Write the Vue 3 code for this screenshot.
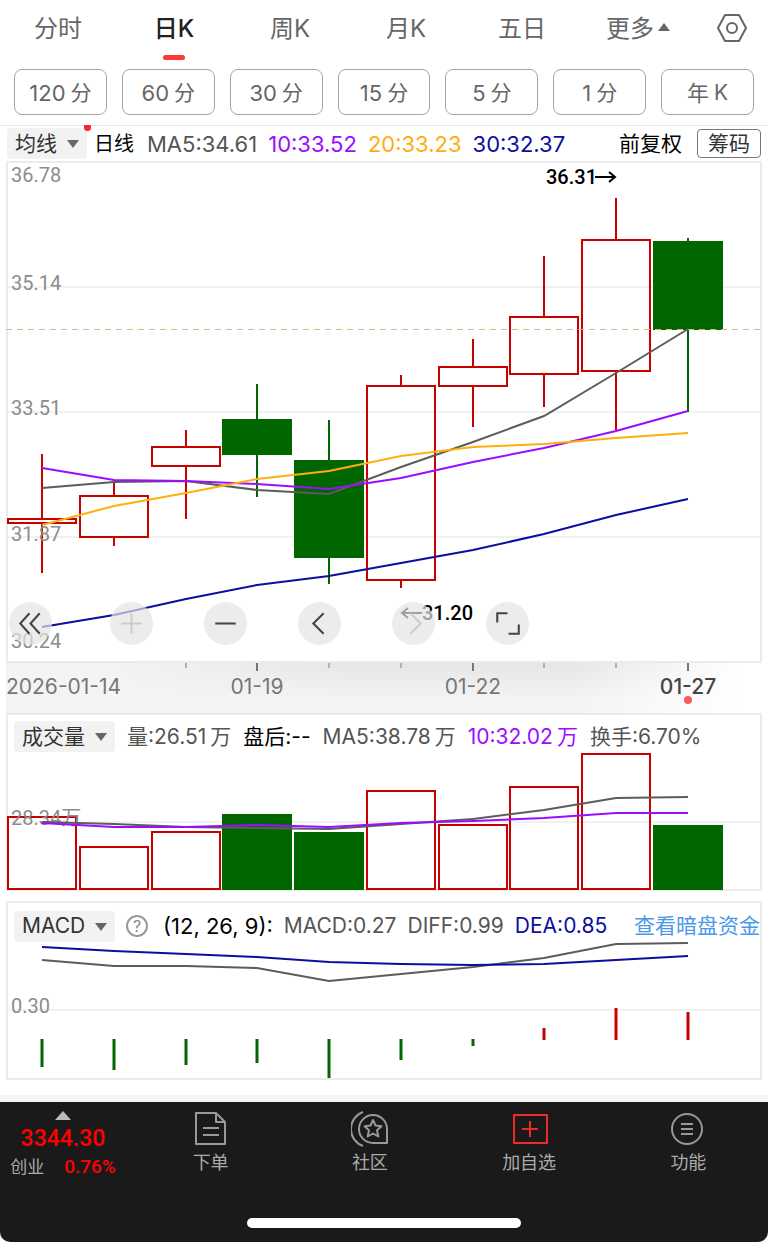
<script setup>
import { ref } from 'vue'

const tabs = ['分时', '日K', '周K', '月K', '五日', '更多']
const activeTab = ref('日K')

const periods = [
  ['120', '分'], ['60', '分'], ['30', '分'], ['15', '分'],
  ['5', '分'], ['1', '分'], ['年', 'K'],
]

const xs = [42, 114, 186, 257, 329, 401, 473, 544, 616, 688]
const line = (ys) => ys.map((y, i) => `${xs[i]},${y}`).join(' ')

// Each candle: high, body top, body bottom, low
const candles = [
  [454, 519, 523, 573, 'up'],
  [482, 496, 537, 546, 'up'],
  [430, 447, 466, 519, 'up'],
  [384, 420, 454, 497, 'down'],
  [420, 461, 557, 584, 'down'],
  [375, 386, 580, 588, 'up'],
  [339, 367, 386, 427, 'up'],
  [256, 317, 374, 407, 'up'],
  [198, 240, 371, 430, 'up'],
  [238, 242, 329, 412, 'down'],
].map(([high, top, bottom, low, dir], i) => ({ high, top, bottom, low, dir, x: xs[i] }))

const priceLines = [
  ['ma5', line([488, 482, 481, 490, 494, 467, 442, 416, 373, 329])],
  ['ma10', line([468, 480, 481, 484, 489, 478, 462, 448, 431, 411])],
  ['ma20', line([525, 506, 493, 479, 471, 456, 447, 444, 438, 433])],
  ['ma30', line([627, 615, 599, 585, 576, 563, 550, 534, 515, 499])],
]
const priceLabels = [['36.78', 182], ['35.14', 290], ['33.51', 415], ['31.87', 541], ['30.24', 648]]

const volumes = [817, 847, 832, 815, 833, 791, 825, 787, 754, 826]
  .map((top, i) => ({ top, x: xs[i], dir: candles[i].dir }))
const volumeLines = [
  ['ma5', line([822, 824, 827, 828, 829, 824, 819, 810, 798, 797])],
  ['ma10', line([823, 827, 827, 825, 827, 823, 821, 818, 813, 813])],
]

const macdBars = [
  [1039, 1067], [1039, 1070], [1039, 1065], [1039, 1063], [1039, 1078],
  [1039, 1060], [1039, 1046], [1028, 1040], [1008, 1040], [1012, 1040],
].map(([y1, y2], i) => ({ y1, y2, x: xs[i], dir: i > 6 ? 'up' : 'down' }))
const macdLines = [
  ['ma5', line([960, 966, 966, 968, 981, 974, 967, 958, 944, 943])],
  ['ma30', line([947, 951, 954, 957, 962, 964, 965, 964, 960, 956])],
]

const minorTicks = [186, 329, 401, 544, 616]
const majorTicks = [257, 473, 688]

const tools = [
  { name: '最早', d: 'M20 11 11 21 20 31M30 11 21 21 30 31', off: false },
  { name: '放大', d: 'M11 21H31M21 11V31', off: true },
  { name: '缩小', d: 'M11 21H31', off: false },
  { name: '向左', d: 'M25 11 15 21 25 31', off: false },
  { name: '向右', d: 'M18 11 28 21 18 31', off: true },
  { name: '全屏', d: 'M11 20V11H21M32 22V31H22', off: false },
]
</script>

<template>
  <div class="page">
    <nav class="tabs">
      <button
        v-for="t in tabs" :key="t" class="tab" :class="{ active: t === activeTab }"
        @click="activeTab = t"
      >{{ t }}<svg v-if="t === '更多'" class="more" viewBox="0 0 12 9"><path d="M6 0 12 8H0Z" /></svg></button>
      <button class="gear" aria-label="设置">
        <svg width="32" height="30" viewBox="0 0 32 30">
          <path d="M9 2H23L30 15 23 28H9L2 15Z" /><circle cx="16" cy="15" r="5" />
        </svg>
      </button>
    </nav>

    <div class="periods">
      <button v-for="p in periods" :key="p[0]" class="period">
        <span>{{ p[0] }}</span><span>{{ p[1] }}</span>
      </button>
    </div>

    <div class="ma-row">
      <label class="picker dotted">
        <select aria-label="主图指标"><option>均线</option></select>
        <svg class="caret" viewBox="0 0 12 9"><path d="M0 0H12L6 8Z" /></svg>
      </label>
      <span class="black kind">日线</span>
      <div class="ma-values">
        <span>MA5:34.61</span>
        <span class="purple">10:33.52</span>
        <span class="orange">20:33.23</span>
        <span class="blue">30:32.37</span>
      </div>
      <span class="black adjust">前复权</span>
      <button class="chips">筹码</button>
    </div>

    <section class="price">
      <div class="panel">
        <svg class="plot" viewBox="8 163 752 498">
          <path class="grid" d="M8 287H760M8 412H760M8 537H760" />
          <g v-for="c in candles" :key="c.x" :class="c.dir">
            <path class="wick" :d="`M${c.x} ${c.high}V${c.top}M${c.x} ${c.bottom}V${c.low}`" />
            <rect :x="c.x - 34" :y="c.top" width="68" :height="c.bottom - c.top" />
          </g>
          <path class="last" d="M6 329H762" />
          <polyline v-for="l in priceLines" :key="l[0]" :class="l[0]" :points="l[1]" />
          <text v-for="p in priceLabels" :key="p[0]" class="scale" x="11" :y="p[1]">{{ p[0] }}</text>
          <text class="mark" x="546" y="184">36.31</text>
          <path class="arrow" d="M595 177H615M609 172 615 177 609 182" />
          <text class="mark" x="422" y="620">31.20</text>
          <path class="arrow" d="M422 613H402M408 608 402 613 408 618" />
        </svg>
        <div class="tools">
          <button v-for="t in tools" :key="t.name" class="tool" :class="{ off: t.off }" :aria-label="t.name">
            <svg viewBox="0 0 42 42"><path :d="t.d" /></svg>
          </button>
        </div>
      </div>
      <div class="dates">
        <svg class="plot" viewBox="6 663 756 50">
          <path v-for="x in minorTicks" :key="x" class="minor" :d="`M${x} 663V668`" />
          <path v-for="x in majorTicks" :key="x" class="major" :d="`M${x} 663V671`" />
          <text class="date" x="6" y="694">2026-01-14</text>
          <text class="date mid" x="257" y="694">01-19</text>
          <text class="date mid" x="473" y="694">01-22</text>
          <text class="date mid now" x="688" y="694">01-27</text>
          <circle class="today" cx="688" cy="700" r="4" />
        </svg>
      </div>
    </section>

    <section class="panel">
      <header class="head">
        <label class="picker">
          <select aria-label="副图指标一"><option>成交量</option></select>
          <svg class="caret" viewBox="0 0 12 9"><path d="M0 0H12L6 8Z" /></svg>
        </label>
        <span>量:26.51<i>万</i></span>
        <span class="black">盘后:--</span>
        <span>MA5:38.78<i>万</i></span>
        <span class="purple">10:32.02<i>万</i></span>
        <span>换手:6.70%</span>
      </header>
      <svg class="plot" viewBox="8 752 752 137">
        <path class="grid" d="M8 822H760" />
        <g v-for="v in volumes" :key="v.x" :class="v.dir">
          <rect :x="v.x - 34" :y="v.top" width="68" :height="889 - v.top" />
        </g>
        <text class="scale" x="11" y="825">28.34万</text>
        <polyline v-for="l in volumeLines" :key="l[0]" :class="l[0]" :points="l[1]" />
      </svg>
    </section>

    <section class="panel macd">
      <header class="head">
        <label class="picker">
          <select aria-label="副图指标二"><option>MACD</option></select>
          <svg class="caret" viewBox="0 0 12 9"><path d="M0 0H12L6 8Z" /></svg>
        </label>
        <button class="help" aria-label="指标说明">?</button>
        <span class="black params">(12, 26, 9):</span>
        <span>MACD:0.27</span>
        <span>DIFF:0.99</span>
        <span class="blue">DEA:0.85</span>
        <a class="link" href="#">查看暗盘资金</a>
      </header>
      <svg class="plot" viewBox="8 941 752 137">
        <path class="grid" d="M8 1010H760" />
        <polyline v-for="l in macdLines" :key="l[0]" :class="l[0]" :points="l[1]" />
        <g v-for="b in macdBars" :key="b.x" :class="b.dir">
          <path class="bar" :d="`M${b.x} ${b.y1}V${b.y2}`" />
        </g>
        <text class="scale" x="11" y="1013">0.30</text>
      </svg>
    </section>

    <footer class="dock">
      <div class="dock-row">
        <button class="index">
          <svg class="up-mark" viewBox="0 0 16 9"><path d="M8 0 16 9H0Z" /></svg>
          <strong>3344.30</strong>
          <span class="index-line"><span>创业</span><b>0.76%</b></span>
        </button>
        <button class="dock-item">
          <svg viewBox="0 0 38 38">
            <path d="M4 3H24L33 12V34H4ZM24 3V12H33M11 18H27M11 25H27" />
          </svg>
          <span>下单</span>
        </button>
        <button class="dock-item">
          <svg viewBox="0 0 38 38">
            <path d="M22 33A14 14 0 1 1 36 19V33Z" />
            <path d="M12 2A18 18 0 0 0 12 36" />
            <path d="M22 10 24.5 15.5 30.5 16.3 26 20.3 27.3 26.5 22 23.5 16.7 26.5 18 20.3 13.5 16.3 19.5 15.5Z" />
          </svg>
          <span>社区</span>
        </button>
        <button class="dock-item add">
          <svg viewBox="0 0 38 38">
            <path d="M4 5H37V33H4ZM12 19H28M20 11V27" />
          </svg>
          <span>加自选</span>
        </button>
        <button class="dock-item">
          <svg viewBox="0 0 38 38">
            <circle cx="18" cy="19" r="15" /><path d="M12 14H24M12 19H24M12 24H24" />
          </svg>
          <span>功能</span>
        </button>
      </div>
      <div class="home"></div>
    </footer>
  </div>
</template>

<style>
body { margin: 0; background: #fff; }
</style>

<style scoped>
.page {
  font-family: Inter, "Noto Sans CJK SC", sans-serif;
  font-size: 21px;
  line-height: 30px;
  color: #555;
  background: #fff;
}
.page * { box-sizing: border-box; }
button, select {
  font: inherit;
  color: inherit;
  border: 0;
  padding: 0;
  margin: 0;
  background: none;
}
.tabs { display: flex; height: 64px; }
.tab {
  position: relative;
  flex: 1;
  height: 58px;
  font-size: 24px;
  color: #666;
}
.tab.active { font-weight: 500; color: #222; }
.tab.active::after {
  content: "";
  position: absolute;
  left: 50%;
  bottom: -2px;
  width: 22px;
  height: 5px;
  margin-left: -11px;
  border-radius: 3px;
  background: #fb3b33;
}
.more { width: 12px; height: 9px; margin: 0 0 5px 4px; fill: #666; }
.gear { flex: 0 0 72px; height: 56px; }
.gear svg { display: block; margin: 0 auto; fill: none; stroke: #666; stroke-width: 2; stroke-linejoin: round; }

.periods {
  display: grid;
  grid-template-columns: repeat(7, 1fr);
  gap: 15px;
  padding: 5px 14px 10px;
  border-bottom: 1px solid #e6e6e6;
}
.period {
  display: flex;
  justify-content: center;
  align-items: center;
  gap: 5px;
  height: 46px;
  padding-top: 2px;
  border: 1px solid #a6a6a6;
  border-radius: 8px;
  color: #666;
}
.period span:first-child { font-size: 22px; }

.ma-row {
  display: flex;
  align-items: center;
  height: 35px;
  padding: 0 7px;
  white-space: nowrap;
}
.ma-values { display: flex; gap: 11px; margin-left: 13px; font-size: 22px; }
.kind { margin-left: 7px; font-size: 20px; }
.adjust { margin-left: auto; }
.chips {
  width: 64px;
  height: 29px;
  margin-left: 15px;
  line-height: 26px;
  border: 1px solid #777;
  border-radius: 4px;
  color: #333;
}
.black { color: #000; }
.purple { color: #9b0dff; }
.orange { color: #ffae0d; }
.blue { color: #0d0da0; }

.picker {
  position: relative;
  display: flex;
  align-items: center;
  height: 31px;
  padding: 0 8px;
  border-radius: 4px;
  background: #f2f2f2;
  color: #333;
}
.picker select { appearance: none; height: 31px; padding-right: 22px; outline: 0; }
.caret {
  position: absolute;
  right: 8px;
  top: 12px;
  width: 12px;
  height: 9px;
  fill: #666;
  pointer-events: none;
}
.dotted::after {
  content: "";
  position: absolute;
  right: -4px;
  top: -3px;
  width: 7px;
  height: 6px;
  border-radius: 1px 1px 4px 4px;
  background: #ff1f35;
}

.panel { position: relative; margin: 0 6px; border: 2px solid #ebebeb; }
.macd { margin-top: 10px; }
.plot { display: block; width: 100%; overflow: visible; fill: none; stroke-width: 2; }
.grid { stroke: #f1f1f1; }
.up { stroke: #c80000; fill: none; }
.down { stroke: #006600; fill: #006600; }
.bar { stroke-width: 3; }
.last { stroke: #d8b88c; stroke-width: 1; stroke-dasharray: 6 5; shape-rendering: crispEdges; }
.ma5 { stroke: #5c5c5c; }
.ma10 { stroke: #9b0dff; }
.ma20 { stroke: #ffae0d; }
.ma30 { stroke: #0d0da0; }
.scale, .mark { font-family: Roboto, "Noto Sans CJK SC", sans-serif; font-size: 20px; }
.scale { fill: #8c8c8c; }
.mark { font-weight: 500; fill: #000; }
.arrow { stroke: #000; }
.tools {
  position: absolute;
  left: 1px;
  bottom: 16px;
  display: flex;
  gap: 51px;
}
.tool {
  width: 43px;
  height: 43px;
  border-radius: 50%;
  background: rgba(228, 228, 228, 0.7);
}
.tool:first-child { margin-right: 7px; }
.tool svg { display: block; width: 43px; height: 43px; fill: none; stroke: #444; stroke-width: 2; }
.tool.off svg { stroke: #ccc; }

.dates {
  margin: 0 6px;
  background:
    linear-gradient(90deg, #f4f4f4 12%, rgba(244, 244, 244, 0) 45%, rgba(255, 255, 255, 0) 75%, #fff 97%),
    linear-gradient(#e6e6e6, #f4f4f4 75%);
}
.minor { stroke: #b0b0b0; }
.major { stroke: #777; }
.date { font-size: 21px; fill: #777; }
.mid { text-anchor: middle; }
.now { font-weight: 500; fill: #444; }
.today { fill: #f75b5f; }

.head {
  display: flex;
  align-items: center;
  gap: 12px;
  height: 37px;
  padding: 6px 0 0 6px;
  white-space: nowrap;
}
.head .picker { width: 101px; }
.head i { font-style: normal; margin-left: 4px; }
.macd .head { height: 38px; gap: 11px; padding-top: 8px; }
.help {
  width: 22px;
  height: 22px;
  border: 2px solid #999;
  border-radius: 50%;
  font-size: 16px;
  line-height: 18px;
  color: #888;
}
.params { margin-left: 4px; font-size: 22px; }
.link { margin-left: auto; color: #4a98ea; text-decoration: none; }

.dock {
  margin-top: 15px;
  padding-bottom: 14px;
  border-top: 7px solid #f4f4f4;
  border-radius: 0 0 10px 10px;
  background: #1a1a1a;
  color: #aaa;
}
.dock-row { display: flex; height: 116px; }
.index {
  flex: 0 0 131px;
  display: flex;
  flex-direction: column;
  align-items: center;
  padding: 9px 5px 0 0;
  font-size: 17px;
}
.up-mark { width: 16px; height: 9px; fill: #bbb; }
.index strong, .index b { font-family: Roboto, sans-serif; font-weight: 500; color: #f00; }
.index strong { margin-top: 5px; font-size: 23px; line-height: 28px; }
.index b { font-size: 19px; }
.index-line { display: flex; gap: 20px; line-height: 28px; }
.dock-item {
  flex: 1;
  display: flex;
  flex-direction: column;
  align-items: center;
  padding-top: 8px;
  font-size: 18px;
}
.dock-item svg { width: 38px; height: 38px; fill: none; stroke: #999; stroke-width: 2; stroke-linejoin: round; }
.dock-item.add svg { stroke: #f02a2a; }
.home {
  width: 274px;
  max-width: 60%;
  height: 10px;
  margin: 0 auto;
  border-radius: 5px;
  background: #fff;
}
</style>
